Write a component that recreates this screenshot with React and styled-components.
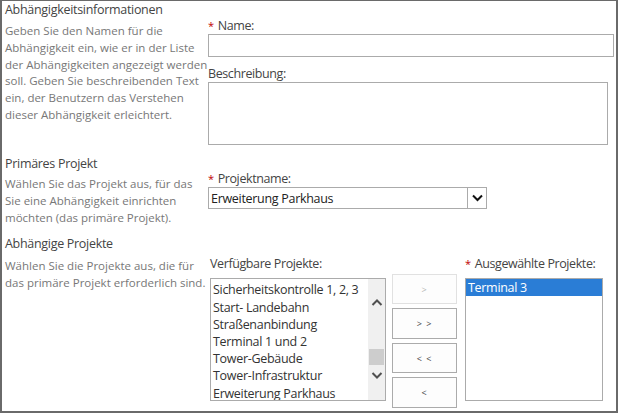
import React from 'react'
import styled, { createGlobalStyle } from 'styled-components'

const GlobalStyle = createGlobalStyle`
  body {
    margin: 0;
    background: #fff;
    font-family: "Open Sans", "Noto Sans", sans-serif;
  }
`

const Frame = styled.div`
  box-sizing: border-box;
  width: 618px;
  height: 413px;
  border: 2px solid #6a6a6a;
  border-top-width: 1px;
  overflow: hidden;
`

const Section = styled.div`
  display: grid;
  grid-template-columns: 206px 1fr;
  margin-top: ${p => p.$top || 0}px;
`

const Info = styled.div`
  padding-left: 3px;
`

const Title = styled.div`
  font-size: 12.5px;
  letter-spacing: -0.3px;
  line-height: 17px;
  color: #444;
`

const Description = styled.div`
  margin-top: ${p => p.$top || 5}px;
  font-size: 11.5px;
  line-height: 16.8px;
  color: #777;
`

const Fields = styled.div`
  padding-top: ${p => p.$top || 0}px;
`

const Label = styled.div`
  font-size: 12.5px;
  letter-spacing: -0.4px;
  line-height: 16px;
  color: #444;
  margin-top: ${p => p.$top || 0}px;
`

const Required = styled.span`
  color: #c00000;
  margin-right: 4px;
  font-size: 11px;
  line-height: 0;
`

const TextInput = styled.div`
  box-sizing: border-box;
  width: ${p => p.$width}px;
  height: ${p => p.$height}px;
  border: 1px solid #ababab;
  background: #fff;
`

const Select = styled.div`
  box-sizing: border-box;
  width: 279px;
  height: 22px;
  border: 1px solid #ababab;
  display: flex;
  align-items: center;
  justify-content: space-between;
  padding-left: 2px;
  font-size: 12.5px;
  letter-spacing: -0.3px;
  color: #222;
`

const SelectArrow = styled.div`
  box-sizing: border-box;
  width: 19px;
  height: 20px;
  border-left: 1px solid #ababab;
  display: flex;
  align-items: center;
  justify-content: center;
`

const Picker = styled.div`
  display: flex;
  padding-left: 2px;
`

const ListGroup = styled.div`
  display: flex;
  flex-direction: column;
  gap: 6px;
`

const ListBox = styled.div`
  box-sizing: border-box;
  width: ${p => p.$width}px;
  height: 123px;
  border: 1px solid #ababab;
  display: flex;
  background: #fff;
`

const Items = styled.div`
  flex: 1;
  padding-top: ${p => p.$top || 0}px;
  overflow: hidden;
`

const Item = styled.div`
  font-size: 12.5px;
  letter-spacing: -0.3px;
  line-height: ${p => (p.$selected ? 17 : 17.2)}px;
  color: ${p => (p.$selected ? '#fff' : '#333')};
  background: ${p => (p.$selected ? '#2a7dd6' : 'transparent')};
  padding-left: 2px;
  white-space: nowrap;
`

const Scrollbar = styled.div`
  width: 17px;
  background: #f0f0f0;
  display: flex;
  flex-direction: column;
  align-items: center;
  padding-top: 20px;
`

const Thumb = styled.div`
  width: 15px;
  height: 16px;
  background: #cdcdcd;
  margin-top: 43px;
`

const DownArrow = styled.div`
  margin-top: 7px;
  display: flex;
`

const Buttons = styled.div`
  display: flex;
  flex-direction: column;
  gap: 4px;
  margin: 18px 8px 0 6px;
`

const MoveButton = styled.div`
  box-sizing: border-box;
  width: 65px;
  height: ${p => p.$height}px;
  border: 1px solid ${p => (p.$disabled ? '#e1e1e1' : '#ababab')};
  background: #fdfdfd;
  color: ${p => (p.$disabled ? '#b5b5b5' : '#444')};
  font-size: 9px;
  letter-spacing: 1px;
  display: flex;
  align-items: center;
  justify-content: center;
`

const Chevron = ({ up }) => (
  <svg width="12" height="7" viewBox="0 0 12 7">
    <path
      d={up ? 'M1.5 6 L6 1.5 L10.5 6' : 'M1.5 1 L6 5.5 L10.5 1'}
      fill="none"
      stroke="#505050"
      strokeWidth="2"
    />
  </svg>
)

const available = [
  'Sicherheitskontrolle 1, 2, 3',
  'Start- Landebahn',
  'Straßenanbindung',
  'Terminal 1 und 2',
  'Tower-Gebäude',
  'Tower-Infrastruktur',
  'Erweiterung Parkhaus'
]

export default function App() {
  return (
    <>
      <GlobalStyle />
      <Frame>
        <Section>
          <Info>
            <Title>Abhängigkeitsinformationen</Title>
            <Description>
              Geben Sie den Namen für die Abhängigkeit ein, wie er in der Liste
              der Abhängigkeiten angezeigt werden soll. Geben Sie beschreibenden
              Text ein, der Benutzern das Verstehen dieser Abhängigkeit
              erleichtert.
            </Description>
          </Info>
          <Fields $top={17}>
            <Label>
              <Required>*</Required>Name:
            </Label>
            <TextInput $width={406} $height={23} />
            <Label $top={9}>Beschreibung:</Label>
            <TextInput $width={400} $height={63} />
          </Fields>
        </Section>

        <Section $top={10}>
          <Info>
            <Title>Primäres Projekt</Title>
            <Description $top={4}>
              Wählen Sie das Projekt aus, für das Sie eine Abhängigkeit
              einrichten möchten (das primäre Projekt).
            </Description>
          </Info>
          <Fields $top={16}>
            <Label>
              <Required>*</Required>Projektname:
            </Label>
            <Select>
              Erweiterung Parkhaus
              <SelectArrow>
                <svg width="11" height="8" viewBox="0 0 11 8">
                  <path d="M1 1.5 L5.5 6 L10 1.5" fill="none" stroke="#111" strokeWidth="2" />
                </svg>
              </SelectArrow>
            </Select>
          </Fields>
        </Section>

        <Section $top={9}>
          <Info>
            <Title>Abhängige Projekte</Title>
            <Description $top={6}>
              Wählen Sie die Projekte aus, die für das primäre Projekt
              erforderlich sind.
            </Description>
          </Info>
          <Fields $top={21}>
            <Picker>
              <ListGroup>
                <Label>Verfügbare Projekte:</Label>
                <ListBox $width={176}>
                  <Items $top={2}>
                    {available.map(name => (
                      <Item key={name}>{name}</Item>
                    ))}
                  </Items>
                  <Scrollbar>
                    <Chevron up />
                    <Thumb />
                    <DownArrow>
                      <Chevron />
                    </DownArrow>
                  </Scrollbar>
                </ListBox>
              </ListGroup>
              <Buttons>
                <MoveButton $height={30} $disabled>&gt;</MoveButton>
                <MoveButton $height={31}>&gt; &gt;</MoveButton>
                <MoveButton $height={30}>&lt; &lt;</MoveButton>
                <MoveButton $height={31}>&lt;</MoveButton>
              </Buttons>
              <ListGroup>
                <Label>
                  <Required>*</Required>Ausgewählte Projekte:
                </Label>
                <ListBox $width={138}>
                  <Items>
                    <Item $selected>Terminal 3</Item>
                  </Items>
                </ListBox>
              </ListGroup>
            </Picker>
          </Fields>
        </Section>
      </Frame>
    </>
  )
}
